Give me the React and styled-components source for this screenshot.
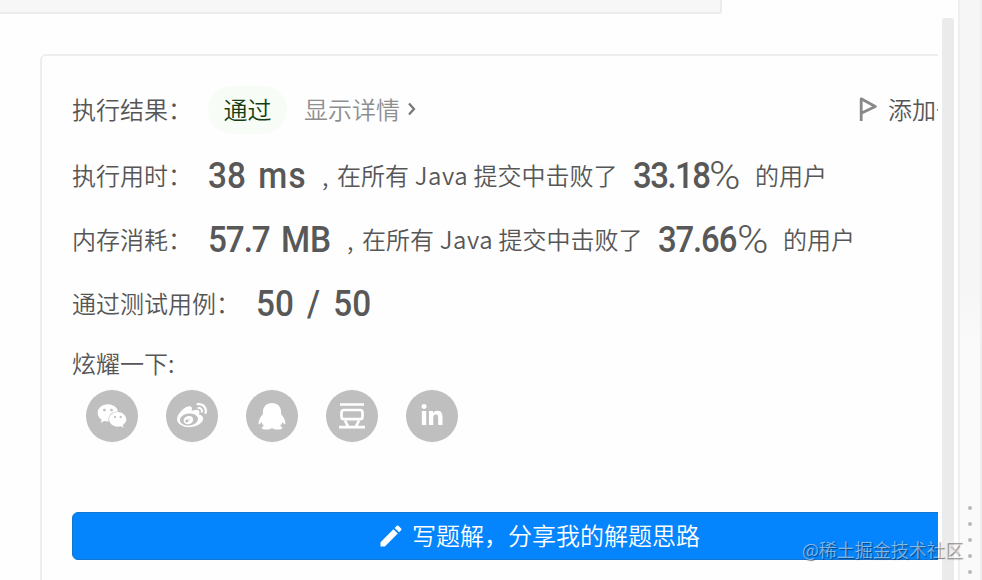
import React from 'react';
import styled, { createGlobalStyle } from 'styled-components';
import { FaWeixin, FaWeibo, FaLinkedinIn } from 'react-icons/fa';
import { MdEdit } from 'react-icons/md';

const GlobalStyle = createGlobalStyle`
  * {
    box-sizing: border-box;
  }

  body {
    margin: 0;
    overflow: hidden;
    background: #fefefe;
    color: #565656;
    font-family: 'Noto Sans CJK SC DemiLight', 'Noto Sans CJK SC', sans-serif;
    font-size: 24px;
    font-weight: 350;
  }
`;

const Page = styled.div`
  position: relative;
  display: flex;
  width: 982px;
  height: 580px;
  overflow: hidden;
`;

const Panel = styled.main`
  flex: 0 0 938px;
  overflow: hidden;
`;

const TabStrip = styled.div`
  width: 722px;
  height: 14px;
  background: #f7f7f7;
  border: solid #ebebeb;
  border-width: 0 2px 2px 0;
  border-radius: 0 0 3px 0;
`;

const Card = styled.section`
  width: 1000px;
  height: 600px;
  margin: 40px 0 0 40px;
  padding: 22px 30px 0;
  border: 2px solid #eeeeee;
  border-radius: 6px;
`;

const Row = styled.div`
  display: flex;
  align-items: center;
  height: ${(props) => props.$height || 64}px;
  line-height: 36px;
  white-space: nowrap;
`;

const Label = styled.span`
  width: ${(props) => props.$width || 136}px;
  padding-bottom: 2px;
`;

const Badge = styled.span`
  width: 79px;
  height: 48px;
  margin-right: 17px;
  border-radius: 24px;
  background: #f7fcf6;
  color: #143c12;
  line-height: 46px;
  text-align: center;
`;

const Details = styled.a`
  display: flex;
  align-items: center;
  gap: 4px;
  padding-bottom: 2px;
  color: #8e8e8e;
`;

const AddNote = styled.div`
  display: flex;
  align-items: center;
  gap: 11px;
  margin-left: auto;
  margin-right: 24px;
  padding-bottom: 2px;
`;

const Figure = styled.strong`
  width: ${(props) => props.$width}px;
  font-family: Roboto, sans-serif;
  font-size: 37px;
  font-weight: 500;
  color: #585858;
`;

/* Roboto squeezed towards the DIN proportions of the figures */
const Digits = styled.span`
  display: inline-block;
  transform: scaleX(${(props) => props.$scale || 0.9});
  transform-origin: left center;
  letter-spacing: ${(props) => props.$spacing || 0}px;
  word-spacing: ${(props) => props.$gap || 0}px;
`;

const Unit = styled.span`
  letter-spacing: ${(props) => props.$spacing || 0}px;
`;

const Percent = styled.span`
  display: block;
  width: ${(props) => props.$width}px;
  font-family: Roboto, sans-serif;
  font-size: 38px;
  font-weight: 300;
  color: #585858;
  transform: scaleX(1.12);
  transform-origin: left center;
`;

const Comma = styled.span`
  width: 15px;
`;

const Phrase = styled.span`
  width: ${(props) => props.$width || 'auto'};
  padding-bottom: 2px;
`;

const Language = styled.span`
  margin-left: 0.5px;
  letter-spacing: 0.5px;
`;

const ShareList = styled.div`
  display: flex;
  gap: 28px;
  margin: 0 14px 70px;
`;

const ShareButton = styled.a`
  display: flex;
  align-items: center;
  justify-content: center;
  width: 52px;
  height: 52px;
  border-radius: 50%;
  background: #bfbfbf;
  color: #fff;
`;

const WriteButton = styled.button`
  display: flex;
  align-items: center;
  justify-content: center;
  gap: 7px;
  width: 100%;
  height: 48px;
  padding: 0 3px 3px 0;
  border: 1px solid #1674cf;
  border-radius: 6px;
  background: #0484fd;
  color: #fff;
  font: inherit;

  svg {
    margin-top: 3px;
  }
`;

const ScrollTrack = styled.div`
  flex: 0 0 12px;
  margin: 18px 4px 0;
  border-radius: 3px 3px 0 0;
  background: #ebebeb;
`;

const Splitter = styled.aside`
  display: flex;
  flex: 0 0 24px;
  flex-direction: column;
  align-items: center;
  gap: 12px;
  padding-top: 506px;
  border: solid #efefef;
  border-width: 0 2px;
  background: linear-gradient(#f6f6f6 50%, #fafafa 60%);
`;

const GripDot = styled.i`
  flex: 0 0 4px;
  width: 4px;
  border-radius: 50%;
  background: #b9b9b9;
`;

const Watermark = styled.div`
  position: absolute;
  left: 802px;
  top: 536px;
  color: rgba(255, 255, 255, 0.5);
  font-size: 18px;
  line-height: 26px;
  text-shadow: 1px 1px 1px rgba(0, 0, 0, 0.5);
  white-space: nowrap;
`;

const ChevronIcon = () => (
  <svg width="16" height="20" viewBox="0 0 16 20" fill="none" stroke="#757575" strokeWidth="2.2">
    <path d="M5 4.5l5 5.5-5 5.5" />
  </svg>
);

const FlagIcon = () => (
  <svg width="19" height="26" viewBox="0 0 19 26" fill="none" stroke="#898989" strokeWidth="2.8" strokeLinejoin="round">
    <path d="M3.2 25V2.8L17.3 10.5 3.2 17.3" />
  </svg>
);

const PenguinIcon = () => (
  <svg width="28" height="27" viewBox="0 0 28 27" fill="#fff">
    <path d="M14 0C8.4 0 4.9 3.8 4.9 9.2v2C3 13.3.3 17.2.6 20.5c.2 1.4 1.2.9 3-1.5.4 1.6 1.2 2.9 2.3 4-1.6.5-2.1 1.2-2.1 1.9C3.8 26 5.9 26.5 8.3 26.5c2.3 0 4.3-.5 5.7-1.6 1.4 1.1 3.4 1.6 5.7 1.6 2.4 0 4.5-.5 4.5-1.6 0-.7-.5-1.4-2.1-1.9 1.1-1.1 1.9-2.4 2.3-4 1.8 2.4 2.8 2.9 3 1.5.3-3.3-2.4-7.2-4.3-9.3v-2C23.1 3.8 19.6 0 14 0z" />
  </svg>
);

const DoubanIcon = () => (
  <svg width="28" height="28" viewBox="0 0 28 28" fill="none" stroke="#fff" strokeWidth="2.7">
    <path d="M2 2.5h24M1 25.2h26M7 18.5l3 6M21 18.5l-3 6" />
    <rect x="3.5" y="8" width="21" height="9.2" rx="2.5" />
  </svg>
);

const metrics = [
  { label: '执行用时：', value: '38', unit: 'ms', unitSpacing: 1.5, valueSpacing: 0, gap: 4.5, height: 68, width: 114, percent: '33.18', spacing: -1.7, digits: 76, after: 46 },
  { label: '内存消耗：', value: '57.7', unit: 'MB', unitSpacing: 0, valueSpacing: -1.2, gap: 4.5, height: 60, width: 139, percent: '37.66', spacing: -1.3, digits: 79, after: 46 },
];

const App = () => (
  <>
    <GlobalStyle />
    <Page>
      <Panel>
        <TabStrip />
        <Card>
          <Row>
            <Label>执行结果：</Label>
            <Badge>通过</Badge>
            <Details>
              显示详情
              <ChevronIcon />
            </Details>
            <AddNote>
              <FlagIcon />
              添加备注
            </AddNote>
          </Row>
          {metrics.map((metric) => (
            <Row key={metric.label} $height={metric.height}>
              <Label>{metric.label}</Label>
              <Figure $width={metric.width}>
                <Digits $gap={metric.gap} $spacing={metric.valueSpacing}>
                  {metric.value} <Unit $spacing={metric.unitSpacing}>{metric.unit}</Unit>
                </Digits>
              </Figure>
              <Comma>,</Comma>
              <Phrase $width="296px">
                在所有 <Language>Java</Language> 提交中击败了
              </Phrase>
              <Figure $width={metric.digits}>
                <Digits $scale={0.89} $spacing={metric.spacing}>{metric.percent}</Digits>
              </Figure>
              <Percent $width={metric.after}>%</Percent>
              <Phrase>的用户</Phrase>
            </Row>
          ))}
          <Row $height={67}>
            <Label $width={184}>通过测试用例：</Label>
            <Figure>
              <Digits $gap={5.5}>50 / 50</Digits>
            </Figure>
          </Row>
          <Row $height={53}>
            <Label>炫耀一下:</Label>
          </Row>
          <ShareList>
            <ShareButton><FaWeixin size={30} /></ShareButton>
            <ShareButton><FaWeibo size={30} /></ShareButton>
            <ShareButton><PenguinIcon /></ShareButton>
            <ShareButton><DoubanIcon /></ShareButton>
            <ShareButton><FaLinkedinIn size={24} /></ShareButton>
          </ShareList>
          <WriteButton>
            <MdEdit size={28} />
            写题解，分享我的解题思路
          </WriteButton>
        </Card>
      </Panel>
      <ScrollTrack />
      <Splitter>
        {[0, 1, 2, 3, 4].map((dot) => (
          <GripDot key={dot} />
        ))}
      </Splitter>
      <Watermark>@稀土掘金技术社区</Watermark>
    </Page>
  </>
);

export default App;
